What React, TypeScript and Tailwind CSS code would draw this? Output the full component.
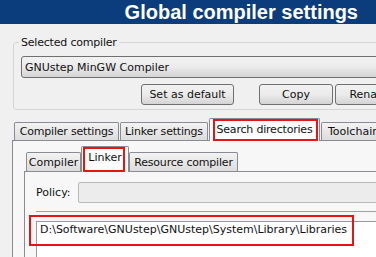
const tabBase =
  "shrink-0 flex items-center justify-center whitespace-nowrap border border-b-0 border-[#898c95] rounded-t-[2px]";
const tabIdle = "bg-linear-to-b from-[#f3f3f3] to-[#dcdcdc]";
const btn =
  "shrink-0 h-[21px] flex items-center justify-center border border-[#707070] rounded-[3px] bg-linear-to-b from-[#f2f2f2] via-[#ebebeb] to-[#d4d4d4]";

export default function App() {
  return (
    <div className="w-[376px] h-[257px] overflow-hidden bg-[#f0f0f0] font-['DejaVu_Sans',sans-serif] text-[11px] leading-[13px] text-[#111]">
      {/* title bar */}
      <div className="h-[24px] bg-[#0b3d7d] flex items-center justify-end pr-[18px]">
        <span className="font-['Liberation_Sans',sans-serif] font-bold text-[20px] leading-[24px] text-white">
          Global compiler settings
        </span>
      </div>

      {/* selected compiler group */}
      <fieldset className="ml-[13px] mt-[12px] w-[420px] border border-[#d5d5d5] rounded-[3px] pl-[7px] pb-[4px]">
        <legend className="-ml-[2px] px-[2px] tracking-[-0.2px]">Selected compiler</legend>
        <div className={`${btn} mt-[7px] h-[22px] w-[400px] justify-start pl-[3px]`}>
          GNUstep MinGW Compiler
        </div>
        <div className="mt-[6px] ml-[120px] flex w-[300px]">
          <div className={`${btn} w-[93px]`}>Set as default</div>
          <div className={`${btn} w-[74px] ml-[25px]`}>Copy</div>
          <div className={`${btn} w-[74px] ml-[2px]`}>Rename</div>
        </div>
      </fieldset>

      {/* outer tabs */}
      <div className="ml-[12px] mt-[8px] w-[420px]">
        <div className="flex items-end h-[22px] pl-[2px] gap-[1px]">
          <div className={`${tabBase} ${tabIdle} h-[18px] w-[105px] tracking-[-0.2px]`}>Compiler settings</div>
          <div className={`${tabBase} ${tabIdle} h-[18px] w-[88px] tracking-[-0.2px]`}>Linker settings</div>
          <div className={`${tabBase} relative z-10 h-[23px] -mb-px w-[111px] bg-[#fcfcfc] pb-[2px] tracking-[-0.2px]`}>
            Search directories
            <span className="absolute left-[3px] right-[1px] top-0 bottom-0 border-2 border-[#e81414]" />
          </div>
          <div className={`${tabBase} ${tabIdle} h-[18px] w-[90px] justify-start pl-[6px]`}>Toolchain executables</div>
        </div>

        <div className="border-l border-t border-[#898c95] bg-[#f7f7f7] h-[120px] pt-[5px] pl-[11px]">
          {/* inner tabs */}
          <div className="flex items-end h-[25px] pl-[2px]">
            <div className={`${tabBase} ${tabIdle} h-[19px] w-[55px]`}>Compiler</div>
            <div className={`${tabBase} relative z-10 h-[26px] -mb-px w-[48px] bg-[#fcfcfc] pb-[4px]`}>
              Linker
              <span className="absolute left-[1px] right-[3px] top-0 bottom-0 border-2 border-[#e81414]" />
            </div>
            <div className={`${tabBase} ${tabIdle} h-[19px] w-[109px] tracking-[-0.2px]`}>Resource compiler</div>
          </div>

          <div className="border-l border-t border-[#898c95] bg-[#f7f7f7] h-[100px] pt-[10px] pl-[11px]">
            <div className="flex items-center h-[21px]">
              <span className="w-[42px] shrink-0">Policy:</span>
              <div className="shrink-0 h-[21px] w-[320px] border border-[#b9b9b9] rounded-l-[2px] bg-[#ececec]" />
            </div>
            <div className="mt-[8px] h-px w-[340px] bg-[#a0a0a0]" />
            <div className="relative mt-[9px] w-[340px] h-[40px] border-l border-t border-[#9a9a9a] bg-white pl-[3px] pt-[1px] whitespace-nowrap">
              D:\Software\GNUstep\GNUstep\System\Library\Libraries
              <span className="absolute -left-[8px] -top-[7px] w-[325px] h-[31px] border-2 border-[#e81414]" />
            </div>
          </div>
        </div>
      </div>
    </div>
  );
}
